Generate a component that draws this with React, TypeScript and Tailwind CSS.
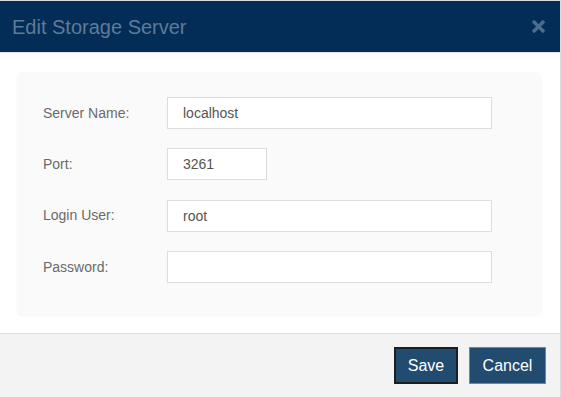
import { useState } from 'react';

const fields = [
  { label: 'Server Name:', value: 'localhost', width: 'w-[325px]' },
  { label: 'Port:', value: '3261', width: 'w-[100px]' },
  { label: 'Login User:', value: 'root', width: 'w-[325px]' },
  { label: 'Password:', value: '', width: 'w-[325px]', type: 'password' },
];

export default function App() {
  const [values, setValues] = useState(fields.map((f) => f.value));

  return (
    <div className="w-[561px] h-[397px] bg-white font-['Liberation_Sans',Arial,sans-serif] overflow-hidden">
      <div className="w-[561px] h-[397px] flex flex-col border-t border-r border-[#dcdcdc]">
        {/* Header */}
        <div className="h-[51px] shrink-0 bg-[#032d56] flex items-center justify-between pl-[12px] pr-[15px]">
          <h3 className="text-[20px] text-[#5f7b97] leading-none">Edit Storage Server</h3>
          <svg viewBox="0 0 12 12" className="w-[13px] h-[13px]">
            <path d="M2 2L10 10M10 2L2 10" stroke="#4c6c8d" strokeWidth="3.2" strokeLinecap="square" />
          </svg>
        </div>
        <div className="h-px bg-[#e3e3e3] shrink-0" />

        {/* Body */}
        <div className="flex-1 pt-[19px] pb-[18px] pl-[17px] pr-[18px]">
          <div className="h-[243px] bg-[#fafafa] rounded-[6px] shadow-[0_1px_2px_rgba(0,0,0,0.04)] pt-[25px] pl-[26px] flex flex-col gap-[19.4px]">
            {fields.map((f, i) => (
              <div key={f.label} className="flex items-center h-[32px]">
                <label className="w-[124px] text-[14px] text-[#6a6a6a]">{f.label}</label>
                <input
                  type={f.type ?? 'text'}
                  value={values[i]}
                  onChange={(e) => setValues(values.map((v, j) => (j === i ? e.target.value : v)))}
                  className={`${f.width} h-[32px] bg-white border border-[#dddddd] px-[15px] text-[14px] text-[#555] outline-none`}
                />
              </div>
            ))}
          </div>
        </div>

        {/* Footer */}
        <div className="h-[64px] shrink-0 border-t border-[#dedede] bg-[#f3f3f3] flex justify-end items-start pt-[13px] pr-[14px] gap-[11px]">
          <button className="w-[64px] h-[37px] bg-[#224b70] border-2 border-[#1c1f22] text-white text-[16px]">
            Save
          </button>
          <button className="w-[77px] h-[37px] bg-[#224b70] border border-[#6f86ab] text-white text-[16px]">
            Cancel
          </button>
        </div>
      </div>
    </div>
  );
}
